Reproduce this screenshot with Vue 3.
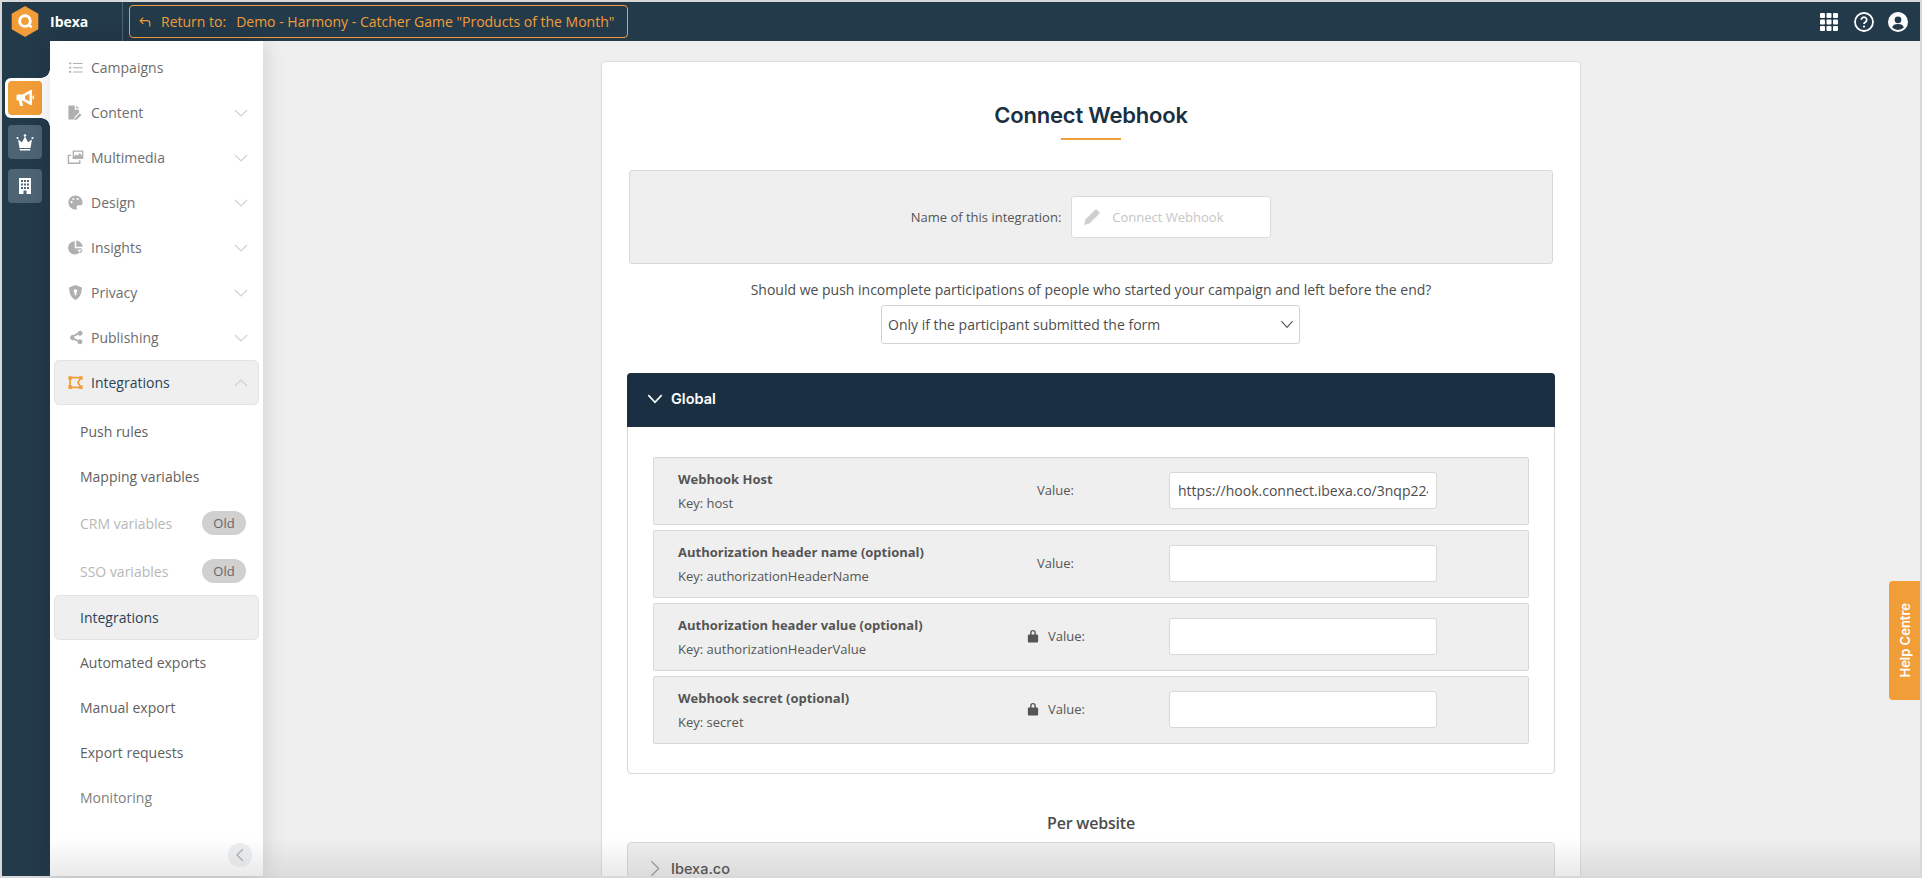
<template>
  <div class="frame">
    <header class="topbar">
      <div class="brand">
        <svg class="logo" viewBox="0 0 28 32">
          <path d="M14 1 27 8.500V23.500L14 31 1 23.500V8.500Z" fill="#f19d38" stroke="#f19d38" stroke-width="1.500" stroke-linejoin="round" />
          <circle cx="14" cy="15.500" r="5.500" fill="none" stroke="#fff" stroke-width="3" />
          <path d="M17 19l4 3" stroke="#fff" stroke-width="2.500" />
        </svg>
        <span class="brand-name">Ibexa</span>
      </div>
      <a class="return-link">
        <svg class="return-icon" viewBox="0 0 16 16">
          <path d="M6 3 2.500 6.500 6 10M3 6.500h7.500a3 3 0 0 1 3 3V13" fill="none" stroke="currentColor" stroke-width="1.400" />
        </svg>
        <span class="return-label">Return to:</span>
        <span class="return-name">Demo - Harmony - Catcher Game "Products of the Month"</span>
      </a>
      <div class="top-icons">
        <svg class="grid-icon" viewBox="0 0 18 18">
          <template v-for="row in 3" :key="row">
            <rect v-for="col in 3" :key="col" :x="(col - 1) * 6.500" :y="(row - 1) * 6.500" width="5" height="5" rx="1" fill="#fff" />
          </template>
        </svg>
        <svg class="round-icon" viewBox="0 0 20 20">
          <circle cx="10" cy="10" r="9" fill="none" stroke="#fff" stroke-width="1.800" />
          <path d="M7.300 7.800a2.700 2.700 0 1 1 4.200 2.300c-1 .6-1.500 1-1.500 2" fill="none" stroke="#fff" stroke-width="1.800" />
          <circle cx="10" cy="14.600" r="1.100" fill="#fff" />
        </svg>
        <svg class="round-icon" viewBox="0 0 20 20">
          <circle cx="10" cy="10" r="10" fill="#fff" />
          <circle cx="10" cy="7.800" r="3.400" fill="#233a4b" />
          <path d="M4.200 15.600c.6-2.500 2.400-3.500 5.800-3.500s5.200 1 5.800 3.500a8 8 0 0 1-11.600 0Z" fill="#233a4b" />
        </svg>
      </div>
    </header>

    <div class="body">
      <nav class="rail">
        <div class="rail-slot active">
          <button class="rail-btn">
            <svg viewBox="0 0 20 20" class="rail-icon">
              <path d="M2.500 6.500h5l8-4.500h1.500v15h-1.500l-8-4.500H7l1.200 5.500H5l-1.200-5.500H2.500a1 1 0 0 1-1-1v-4a1 1 0 0 1 1-1Zm12 -.8-4.500 2.300v3l4.500 2.300Z" fill="#fff" fill-rule="evenodd" />
              <rect x="17.500" y="7.500" width="1.500" height="4" rx=".7" fill="#fff" />
            </svg>
          </button>
        </div>
        <div class="rail-slot">
          <button class="rail-btn">
            <svg viewBox="0 0 20 20" class="rail-icon">
              <path d="M4.500 16 3 7.500l4 2.800L10 4.500l3 5.800 4-2.800L15.500 16ZM4.800 17h10.400v1.500H4.800Z" fill="#fff" />
              <circle cx="10" cy="3.500" r="1.300" fill="#fff" />
              <circle cx="2.500" cy="6" r="1.100" fill="#fff" />
              <circle cx="17.500" cy="6" r="1.100" fill="#fff" />
            </svg>
          </button>
        </div>
        <div class="rail-slot">
          <button class="rail-btn">
            <svg viewBox="0 0 20 20" class="rail-icon">
              <path d="M4 2h12v16h-4.500v-3.500h-3V18H4ZM6 4v2h2V4Zm3 0v2h2V4Zm3 0v2h2V4ZM6 7.500v2h2v-2Zm3 0v2h2v-2Zm3 0v2h2v-2ZM6 11v2h2v-2Zm3 0v2h2v-2Zm3 0v2h2v-2Z" fill="#fff" fill-rule="evenodd" />
            </svg>
          </button>
        </div>
      </nav>

      <aside class="sidebar">
        <div class="nav-list">
          <div v-for="item in navItems" :key="item.label" class="nav-item" :class="{ open: item.open }">
            <svg class="nav-icon" viewBox="0 0 24 24"><path :d="item.icon" fill-rule="evenodd" /></svg>
            <span>{{ item.label }}</span>
            <svg v-if="item.chevron" class="nav-chevron" viewBox="0 0 14 8">
              <path :d="item.open ? 'M1 7l6-6 6 6' : 'M1 1l6 6 6-6'" fill="none" stroke="currentColor" stroke-width="1.200" />
            </svg>
          </div>
        </div>
        <div class="sub-list">
          <div v-for="sub in subItems" :key="sub.label" class="sub-item" :class="sub.state">
            <span>{{ sub.label }}</span>
            <span v-if="sub.old" class="old-badge">Old</span>
          </div>
        </div>
        <button class="collapse-btn">
          <svg viewBox="0 0 8 14" width="8" height="14">
            <path d="M7 1 1 7l6 6" fill="none" stroke="#a9adb2" stroke-width="1.200" />
          </svg>
        </button>
      </aside>

      <main class="main">
        <section class="card">
          <h1 class="title">Connect Webhook</h1>
          <div class="title-rule"></div>

          <div class="name-box">
            <label class="name-label">Name of this integration:</label>
            <div class="name-field">
              <svg class="pencil" viewBox="0 0 20 20">
                <path d="M14.500 1 19 5.500 7.200 17.300 1 19l1.700-6.200Z" fill="#cfcfcf" />
              </svg>
              <input class="name-input" placeholder="Connect Webhook" />
            </div>
          </div>

          <p class="question">Should we push incomplete participations of people who started your campaign and left before the end?</p>
          <div class="select-wrap">
            <select class="select">
              <option>Only if the participant submitted the form</option>
            </select>
            <svg class="select-arrow" viewBox="0 0 12 8">
              <path d="M1 1l5 5.500L11 1" fill="none" stroke="#555" stroke-width="1" />
            </svg>
          </div>

          <div class="panel">
            <div class="panel-head">
              <svg viewBox="0 0 14 9" width="16" height="10">
                <path d="M1 1l6 6.500L13 1" fill="none" stroke="#fff" stroke-width="1.500" />
              </svg>
              <span>Global</span>
            </div>
            <div class="panel-body">
              <div v-for="row in webhookRows" :key="row.key" class="var-row">
                <div class="var-info">
                  <div class="var-name">{{ row.name }}</div>
                  <div class="var-key">Key: {{ row.key }}</div>
                </div>
                <div class="var-label" :class="{ locked: row.locked }">
                  <svg v-if="row.locked" class="lock" viewBox="0 0 12 15">
                    <path d="M3 6V4a3 3 0 0 1 6 0v2h1.500a1 1 0 0 1 1 1v6.500a1 1 0 0 1-1 1h-9a1 1 0 0 1-1-1V7a1 1 0 0 1 1-1ZM4.500 6h3V4a1.500 1.500 0 0 0-3 0Z" fill="#555" fill-rule="evenodd" />
                  </svg>
                  <span>Value:</span>
                </div>
                <input class="var-input" :value="row.value" />
              </div>
            </div>
          </div>

          <h2 class="per-website">Per website</h2>
          <div class="site-head">
            <svg viewBox="0 0 8 14" width="10" height="17">
              <path d="M1 1l6 6-6 6" fill="none" stroke="#999" stroke-width="1" />
            </svg>
            <span>Ibexa.co</span>
          </div>
        </section>
      </main>

      <div class="bottom-fade"></div>
      <div class="help-tab"><span>Help Centre</span></div>
    </div>
  </div>
</template>

<script setup>
const navItems = [
  { label: "Campaigns", icon: "M3 5h3v2.500H3ZM3 11h3v2.500H3ZM3 17h3v2.500H3ZM8.500 5.500H22V7H8.500ZM8.500 11.500H22V13H8.500ZM8.500 17.500H22V19H8.500Z" },
  { label: "Content", chevron: true, icon: "M2 2h9v6h6v4l-6 6-.8 4H2ZM13 2l4 4.500h-4ZM18 13l2.500 2.500-6.500 6.500-3 .8.700-3Z" },
  { label: "Multimedia", chevron: true, icon: "M8 2h15v12H8Zm2 2v6.500l3-3 2 2 3-4 3 4V4ZM1 8h5v2H3v9h14v-3h2v5H1Z" },
  { label: "Design", chevron: true, icon: "M12 2C6 2 2 6.500 2 12s4.500 10 10 10c2 0 2.500-1.500 1.800-3-.6-1.500.2-3 2-3H19c2 0 3-1.500 3-4 0-5.500-4.500-10-10-10ZM6.500 13a1.500 1.500 0 1 1 0-3 1.500 1.500 0 0 1 0 3Zm2.500-4.500a1.500 1.500 0 1 1 0-3 1.500 1.500 0 0 1 0 3Zm6 0a1.500 1.500 0 1 1 0-3 1.500 1.500 0 0 1 0 3Z" },
  { label: "Insights", chevron: true, icon: "M11 3v10h9.500A9.500 9.500 0 1 1 11 3ZM13 2a9.500 9.500 0 0 1 9 9h-9ZM14 15h8a9 9 0 0 1-2.500 5Z" },
  { label: "Privacy", chevron: true, icon: "M12 1.500 21 5c0 8-2.500 14-9 17.500C5.500 19 3 13 3 5Zm0 6a2.500 2.500 0 0 0-1.200 4.700V16h2.400v-3.800A2.500 2.500 0 0 0 12 7.500Z" },
  { label: "Publishing", chevron: true, icon: "M18.500 2.500a3.500 3.500 0 1 1-2.700 5.700L10 11a3.500 3.500 0 0 1 0 1.800l5.800 2.900a3.500 3.500 0 1 1-.9 1.900L9 15.700a3.800 3.800 0 1 1 0-7.400l5.900-2.900a3.500 3.500 0 0 1 3.600-2.900Z" },
  {
    label: "Integrations",
    chevron: true,
    open: true,
    icon: "M2 3h5v5H2ZM17 3h5v5h-5ZM2 16h5v5H2ZM17 16h5v5h-5ZM7 4h10v2.500H7ZM7 17.500h10V20H7ZM3 8h2.500v8H3ZM16.500 8h2.700l-2.500 4 2.500 4h-2.700L14 12Z",
  },
];

const subItems = [
  { label: "Push rules" },
  { label: "Mapping variables" },
  { label: "CRM variables", old: true, state: "disabled" },
  { label: "SSO variables", old: true, state: "disabled" },
  { label: "Integrations", state: "current" },
  { label: "Automated exports" },
  { label: "Manual export" },
  { label: "Export requests" },
  { label: "Monitoring", state: "dim" },
];

const webhookRows = [
  { name: "Webhook Host", key: "host", value: "https://hook.connect.ibexa.co/3nqp224xk8" },
  { name: "Authorization header name (optional)", key: "authorizationHeaderName", value: "" },
  { name: "Authorization header value (optional)", key: "authorizationHeaderValue", value: "", locked: true },
  { name: "Webhook secret (optional)", key: "secret", value: "", locked: true },
];
</script>

<style>
html,
body {
  margin: 0;
  height: 100%;
  overflow: hidden;
}
</style>

<style scoped>
.frame {
  box-sizing: border-box;
  width: 1922px;
  height: 878px;
  padding: 2px;
  background: #d8d8d8;
  display: flex;
  flex-direction: column;
  overflow: hidden;
  font-family: "Open Sans", sans-serif;
  color: #555;
}

/* top bar */
.topbar {
  flex: 0 0 39px;
  background: #233a4b;
  display: flex;
  align-items: center;
}

.brand {
  width: 121px;
  height: 100%;
  box-sizing: border-box;
  padding-left: 9px;
  display: flex;
  align-items: center;
  gap: 11px;
  border-right: 1px solid #4d6475;
}

.logo {
  width: 28px;
  height: 31px;
}

.brand-name {
  color: #fff;
  font-size: 14px;
  font-weight: 700;
}

.return-link {
  margin-left: 6px;
  width: 499px;
  height: 33px;
  box-sizing: border-box;
  border: 1px solid #f19d38;
  border-radius: 4px;
  padding-left: 8px;
  display: flex;
  align-items: center;
  color: #f19d38;
  white-space: nowrap;
}

.return-icon {
  width: 14px;
  height: 14px;
  margin-right: 9px;
}

.return-label {
  font-size: 14px;
  margin-right: 10px;
}

.return-name {
  font-size: 14px;
  font-weight: 500;
}

.top-icons {
  margin-left: auto;
  padding-right: 12px;
  display: flex;
  align-items: center;
  gap: 15px;
}

.grid-icon {
  width: 18px;
  height: 18px;
  margin-right: 1px;
}

.round-icon {
  width: 20px;
  height: 20px;
}

.top-icons .round-icon:last-child {
  margin-left: -1px;
}

/* main row */
.body {
  flex: 1;
  min-height: 0;
  display: flex;
  position: relative;
}

.rail {
  flex: 0 0 48px;
  background: #233a4b;
  padding-top: 37px;
  display: flex;
  flex-direction: column;
}

.rail-slot {
  height: 34px;
  margin-left: 3px;
  margin-top: 10px;
  padding-left: 3px;
  display: flex;
  align-items: center;
}

.rail-slot.active {
  height: 40px;
  margin-top: 0;
  background: #fff;
  border-radius: 6px 0 0 6px;
  position: relative;
}

.rail-slot.active + .rail-slot {
  margin-top: 7px;
}

/* inverted corners where the active tab joins the sidebar */
.rail-slot.active::before,
.rail-slot.active::after {
  content: "";
  position: absolute;
  right: 0;
  width: 9px;
  height: 9px;
}

.rail-slot.active::before {
  top: -9px;
  background: radial-gradient(circle at 0 0, #233a4b 8.500px, #fff 9px);
}

.rail-slot.active::after {
  bottom: -9px;
  background: radial-gradient(circle at 0 100%, #233a4b 8.500px, #fff 9px);
}

.rail-btn {
  width: 34px;
  height: 34px;
  border: 0;
  border-radius: 4px;
  padding: 0;
  background: #4d6475;
  display: flex;
  align-items: center;
  justify-content: center;
}

.active .rail-btn {
  background: #f19d38;
}

.rail-icon {
  width: 20px;
  height: 20px;
}

.sidebar {
  flex: 0 0 213px;
  background: #fff;
  position: relative;
  z-index: 1;
  box-shadow: 0 0 22px rgba(0, 0, 0, 0.14);
  padding: 4px 4px 0;
  box-sizing: border-box;
}

.nav-item {
  height: 45px;
  box-sizing: border-box;
  padding: 0 10px 0 12px;
  display: flex;
  align-items: center;
  font-size: 14px;
  color: #6d6d6d;
  border: 1px solid transparent;
  border-radius: 5px;
}

.nav-item.open {
  background: #efefef;
  border-color: #e3e3e3;
  color: #2b4356;
}

.nav-icon {
  width: 17px;
  height: 17px;
  margin-right: 7px;
  fill: #b0b0b0;
}

.open .nav-icon {
  fill: #f19d38;
}

.nav-chevron {
  width: 14px;
  height: 8px;
  margin-left: auto;
  color: #d2d2d2;
}

.sub-list {
  padding-top: 4px;
}

.sub-item {
  height: 45px;
  box-sizing: border-box;
  padding: 0 12px 0 25px;
  display: flex;
  align-items: center;
  justify-content: space-between;
  font-size: 14px;
  color: #5f5f5f;
  border: 1px solid transparent;
  border-radius: 5px;
}

.sub-item.disabled {
  height: 48px;
  color: #b7b7b7;
}

.sub-item.current {
  background: #efefef;
  border-color: #e3e3e3;
  color: #2b4356;
}

.sub-item.dim {
  color: #808080;
}

.old-badge {
  width: 44px;
  height: 24px;
  border-radius: 12px;
  background: #d0d0d0;
  color: #666;
  font-size: 13px;
  display: flex;
  align-items: center;
  justify-content: center;
}

.collapse-btn {
  position: absolute;
  right: 11px;
  bottom: 9px;
  width: 24px;
  height: 24px;
  border: 0;
  border-radius: 50%;
  background: #eef0f2;
  display: flex;
  align-items: center;
  justify-content: center;
  padding: 0;
  z-index: 3;
}

.main {
  flex: 1;
  min-width: 0;
  background: #efefef;
  padding-top: 20px;
  overflow: hidden;
}

.card {
  box-sizing: border-box;
  width: 980px;
  margin: 0 0 0 338px;
  height: 900px;
  background: #fff;
  border: 1px solid #dcdcdc;
  border-radius: 4px;
  padding: 0 25px;
}

.title {
  margin: 38px 0 0;
  font-family: Inter, sans-serif;
  font-size: 22px;
  line-height: 30px;
  font-weight: 600;
  color: #1a3042;
  text-align: center;
  letter-spacing: -0.2px;
}

.title-rule {
  width: 60px;
  height: 2px;
  margin: 8px auto 30px;
  background: #f19d38;
}

.name-box {
  box-sizing: border-box;
  width: 924px;
  margin-left: 2px;
  height: 94px;
  background: #efefef;
  border: 1px solid #d8d8d8;
  border-radius: 3px;
  display: flex;
  align-items: center;
  justify-content: center;
  gap: 10px;
}

.name-label {
  font-size: 13px;
  color: #555;
}

.name-field {
  box-sizing: border-box;
  width: 200px;
  height: 42px;
  background: #fff;
  border: 1px solid #dcdcdc;
  border-radius: 3px;
  display: flex;
  align-items: center;
  padding-left: 11px;
}

.pencil {
  width: 18px;
  height: 18px;
  margin-right: 11px;
}

.name-input {
  border: 0;
  outline: 0;
  width: 140px;
  padding: 0;
  font: 13px "Open Sans", sans-serif;
}

.name-input::placeholder {
  color: #c6c6c6;
  opacity: 1;
}

.question {
  margin: 16px 0 0;
  font-size: 14px;
  line-height: 20px;
  color: #4d4d4d;
  text-align: center;
}

.select-wrap {
  position: relative;
  width: 419px;
  margin: 5px 0 0 254px;
}

.select {
  appearance: none;
  width: 100%;
  height: 39px;
  box-sizing: border-box;
  background: #fff;
  border: 1px solid #d3d3d3;
  border-radius: 3px;
  padding: 0 6px;
  font: 14px "Open Sans", sans-serif;
  color: #4d4d4d;
  display: block;
}

.select-arrow {
  position: absolute;
  right: 6px;
  top: 15px;
  width: 14px;
  height: 9px;
}

.panel {
  margin: 29px 0 0;
  height: 401px;
  box-sizing: border-box;
  border: 1px solid #d8d8d8;
  border-radius: 4px;
}

.panel-head {
  height: 54px;
  margin: -1px -1px 0;
  background: #1a3042;
  border-radius: 4px 4px 0 0;
  color: #fff;
  display: flex;
  align-items: center;
  gap: 8px;
  padding: 0 0 3px 20px;
  box-sizing: border-box;
  font-family: Inter, sans-serif;
  font-size: 14.500px;
  font-weight: 600;
}

.panel-body {
  padding: 30px 25px 0;
  display: flex;
  flex-direction: column;
  gap: 5px;
}

.var-row {
  height: 68px;
  box-sizing: border-box;
  background: #efefef;
  border: 1px solid #d8d8d8;
  border-radius: 2px;
  display: flex;
  align-items: center;
  padding-left: 24px;
}

.var-info {
  flex: 0 0 335px;
}

.var-name {
  font-size: 13px;
  font-weight: 700;
  line-height: 20px;
  color: #555;
}

.var-key {
  font-size: 13px;
  line-height: 20px;
  margin-top: 4px;
  color: #555;
}

.var-label {
  flex: 0 0 156px;
  box-sizing: border-box;
  padding-left: 24px;
  font-size: 13px;
  color: #555;
  display: flex;
  align-items: center;
  margin-top: -3px;
}

.var-label.locked {
  padding-left: 14px;
}

.lock {
  width: 12px;
  height: 14px;
  margin-right: 9px;
}

.var-input {
  box-sizing: border-box;
  width: 268px;
  height: 37px;
  background: #fff;
  border: 1px solid #d8d8d8;
  border-radius: 3px;
  padding: 0 8px;
  outline: 0;
  font: 14px "Open Sans", sans-serif;
  color: #4d4d4d;
  margin-top: -2px;
}

.per-website {
  margin: 38px 0 0;
  font-size: 16px;
  line-height: 22px;
  font-weight: 600;
  color: #4d4d4d;
  text-align: center;
  font-family: "Open Sans", sans-serif;
  letter-spacing: -0.2px;
}

.site-head {
  margin: 8px 0 0;
  height: 54px;
  box-sizing: border-box;
  background: #efefef;
  border: 1px solid #d8d8d8;
  border-radius: 4px;
  display: flex;
  align-items: center;
  gap: 11px;
  padding: 0 0 1px 22px;
  font-family: Inter, sans-serif;
  font-size: 14.500px;
  font-weight: 500;
  color: #4d4d4d;
}

.bottom-fade {
  position: absolute;
  left: 48px;
  right: 0;
  bottom: 0;
  height: 38px;
  background: linear-gradient(rgba(120, 120, 120, 0), rgba(120, 120, 120, 0.16));
  pointer-events: none;
  z-index: 2;
}

.help-tab {
  position: absolute;
  right: 0;
  top: 540px;
  width: 31px;
  height: 119px;
  background: #f19d38;
  border-radius: 4px 0 0 4px;
  display: flex;
  align-items: center;
  justify-content: center;
  z-index: 4;
}

.help-tab span {
  writing-mode: vertical-rl;
  transform: rotate(180deg);
  color: #fff;
  font-family: Inter, sans-serif;
  font-size: 13px;
  font-weight: 600;
}
</style>
